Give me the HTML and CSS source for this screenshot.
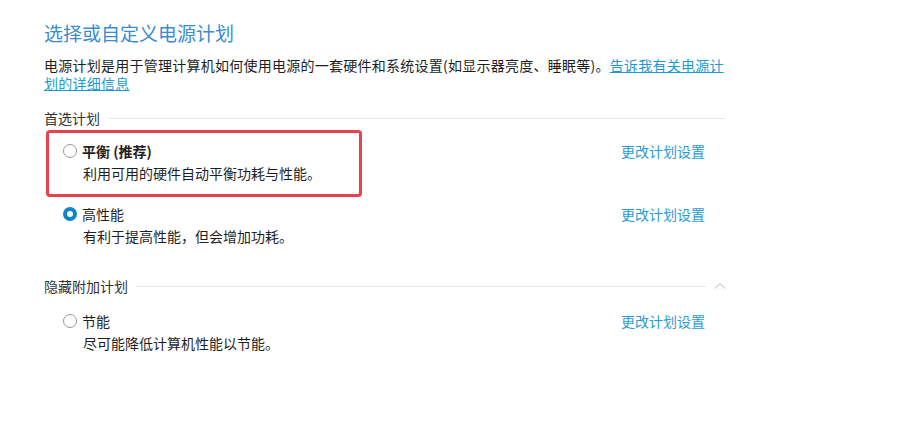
FILE: index.html
```html
<!DOCTYPE html>
<html>
<head>
	<meta charset="utf-8">
	<title>电源选项</title>
	<link rel="stylesheet" href="styles.css">
</head>
<body>
	<div class="page">
		<h1 class="title">选择或自定义电源计划</h1>
		<p class="intro">电源计划是用于管理计算机如何使用电源的一套硬件和系统设置(如显示器亮度、睡眠等)。<a href="#" class="link">告诉我有关电源计划的详细信息</a></p>

		<div class="group">
			<div class="group-head"><span>首选计划</span><i class="rule"></i></div>
			<div class="plan">
				<div class="plan-main">
					<label class="plan-name bold"><span class="radio"></span>平衡 (推荐)</label>
					<div class="plan-desc">利用可用的硬件自动平衡功耗与性能。</div>
				</div>
				<a href="#" class="plan-link">更改计划设置</a>
				<div class="mark"></div>
			</div>
			<div class="plan">
				<div class="plan-main">
					<label class="plan-name"><span class="radio on"></span>高性能</label>
					<div class="plan-desc">有利于提高性能，但会增加功耗。</div>
				</div>
				<a href="#" class="plan-link">更改计划设置</a>
			</div>
		</div>

		<div class="group extra">
			<div class="group-head short"><span>隐藏附加计划</span><i class="rule"></i>
				<svg class="chev" width="12" height="8" viewBox="0 0 12 8"><path d="M1 6.5 6 1.5 11 6.5" fill="none" stroke="#b5b5b5" stroke-width="1"/></svg>
			</div>
			<div class="plan">
				<div class="plan-main">
					<label class="plan-name"><span class="radio"></span>节能</label>
					<div class="plan-desc">尽可能降低计算机性能以节能。</div>
				</div>
				<a href="#" class="plan-link">更改计划设置</a>
			</div>
		</div>
	</div>
</body>
</html>
```
FILE: styles.css
```css
*{margin: 0;padding: 0;box-sizing: border-box;}
body{background: #fff;font-family: "Noto Sans CJK SC", "Microsoft YaHei", sans-serif;font-size: 14px;color: #1e1e1e;}
.page{width: 725px;padding: 20px 0 0 44px;}
.title{font-size: 19px;font-weight: normal;line-height: 26px;color: #3a8ccf;}
.intro{margin-top: 10px;line-height: 18px;width: 681px;letter-spacing: 0.25px;}
.link{color: #1c9ad6;text-decoration: underline;}

.group-head{display: flex;align-items: center;height: 20px;margin-top: 16px;color: #333;}
.group-head .rule{flex: 1;height: 1px;background: #e6e6e6;margin-left: 8px;}
.group-head.short .rule{margin-right: 8px;}
.group-head .chev{flex: none;margin-right: -1px;}
.extra .group-head{margin-top: 19px;margin-bottom: 5px;}

.plan{position: relative;display: flex;justify-content: space-between;padding: 10px 20px 11px 20px;}
.group .group-head + .plan{margin-top: 3px;}
.plan-name{display: flex;align-items: center;height: 20px;line-height: 20px;}
.plan-name.bold{font-weight: bold;}
.plan-desc{margin: 2px 0 0 19px;line-height: 20px;}
.plan-link{color: #2a9ad6;text-decoration: none;line-height: 20px;height: 20px;}

.radio{flex: none;width: 14px;height: 14px;border: 1px solid #9a9a9a;border-radius: 50%;margin: 0 5px 0 -1px;background: #fff;}
.radio.on{border: 4px solid #0b86c6;}

/* red highlight around the recommended plan */
.mark{position: absolute;top: -1px;left: 2px;width: 316px;height: 67px;border: 3px solid #e9414f;border-radius: 4px;}
```
